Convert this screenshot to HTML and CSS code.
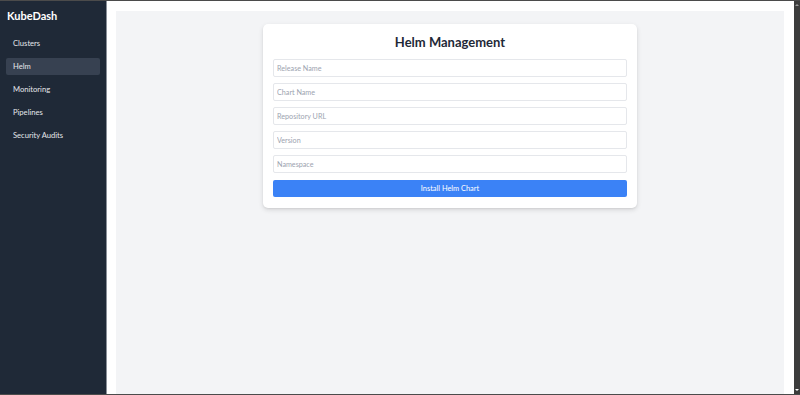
FILE: index.html
```html
<!DOCTYPE html>
<html lang="en">

<head>
  <meta charset="UTF-8">
  <title>KubeDash - Helm</title>
  <meta name="viewport" content="width=device-width, initial-scale=1.0">
  <link rel="stylesheet" href="styles.css">
</head>

<body>
  <div class="frame">
    <!-- SIDEBAR -->
    <aside class="sidebar">
      <h1 class="brand">KubeDash</h1>
      <nav class="nav">
        <a class="nav__item" href="#">Clusters</a>
        <a class="nav__item nav__item--active" href="#">Helm</a>
        <a class="nav__item" href="#">Monitoring</a>
        <a class="nav__item" href="#">Pipelines</a>
        <a class="nav__item" href="#">Security Audits</a>
      </nav>
    </aside>

    <!-- CONTENT -->
    <main class="main">
      <div class="panel">
        <form class="card form">
          <h2 class="card__title">Helm Management</h2>
          <input class="form__input" type="text" placeholder="Release Name">
          <input class="form__input" type="text" placeholder="Chart Name">
          <input class="form__input" type="text" placeholder="Repository URL">
          <input class="form__input" type="text" placeholder="Version">
          <input class="form__input" type="text" placeholder="Namespace">
          <button class="form__submit" type="button">Install Helm Chart</button>
        </form>
      </div>
    </main>

    <div class="scrollbar">
      <span class="scrollbar__arrow scrollbar__arrow--up"></span>
      <span class="scrollbar__arrow scrollbar__arrow--down"></span>
    </div>
  </div>
</body>

</html>
```

FILE: styles.css
```css
:root {
  --fontFamily: "Lato", "Open Sans", sans-serif;
  --sidebarBg: #1f2937;
  --sidebarActiveBg: #374151;
  --panelBg: #f3f4f6;
  --inputBorder: #e5e7eb;
  --placeholder: #9ca3af;
  --textDark: #1f2937;
  --primary: #3b82f6;
  --frameColor: #4b4b4b;
}

* {
  box-sizing: border-box;
}

html,
body {
  margin: 0;
  height: 100%;
}

body {
  font-family: var(--fontFamily);
  background: #fff;
}

.frame {
  display: flex;
  height: 395px;
  border-top: 1px solid var(--frameColor);
  border-bottom: 1px solid var(--frameColor);
  overflow: hidden;
}

/* sidebar */
.sidebar {
  width: 107px;
  flex-shrink: 0;
  background-color: var(--sidebarBg);
  border-right: 1px solid #8a9099;
  color: #fff;
  padding: 8px 6px;
}

.brand {
  margin: 0 0 12px 1px;
  font-size: 11px;
  line-height: 14px;
  font-weight: 700;
}

.nav {
  display: flex;
  flex-direction: column;
  gap: 6px;
}

.nav__item {
  display: block;
  height: 17px;
  line-height: 17px;
  padding-left: 7px;
  border-radius: 2px;
  font-size: 7.6px;
  color: #e5e7eb;
  text-decoration: none;
}

.nav__item--active {
  background-color: var(--sidebarActiveBg);
}

/* main */
.main {
  flex: 1;
  padding: 10px 10px 0 9px;
  background: #fff;
}

.panel {
  height: 100%;
  background-color: var(--panelBg);
  padding-top: 13px;
}

.card {
  width: 374px;
  margin: 0 auto;
  background: #fff;
  border-radius: 5px;
  box-shadow: 0 2px 5px rgba(0, 0, 0, 0.12), 0 1px 2px rgba(0, 0, 0, 0.06);
  padding: 9px 10px 11px;
}

.card__title {
  margin: 0 0 8px;
  text-align: center;
  font-size: 13px;
  line-height: 18px;
  font-weight: 700;
  color: var(--textDark);
}

.form {
  display: flex;
  flex-direction: column;
}

.form__input {
  display: block;
  width: 100%;
  height: 18px;
  margin-bottom: 6px;
  padding: 0 3px;
  border: 1px solid var(--inputBorder);
  border-radius: 2px;
  font-family: inherit;
  font-size: 7.2px;
  color: var(--textDark);
  outline: 0;
}

.form__input::placeholder {
  color: var(--placeholder);
}

.form__submit {
  display: block;
  width: 100%;
  height: 17px;
  margin-top: 1px;
  border: 0;
  border-radius: 2px;
  background-color: var(--primary);
  color: #fff;
  font-family: inherit;
  font-size: 7.4px;
  cursor: pointer;
}

/* fake scrollbar */
.scrollbar {
  position: relative;
  width: 6px;
  flex-shrink: 0;
  background-color: #3c3c3c;
}

.scrollbar__arrow {
  position: absolute;
  left: 1px;
  width: 0;
  height: 0;
  border-left: 2px solid transparent;
  border-right: 2px solid transparent;
}

.scrollbar__arrow--up {
  top: 3px;
  border-bottom: 2px solid #9a9a9a;
}

.scrollbar__arrow--down {
  bottom: 3px;
  border-top: 2px solid #fff;
}
```
